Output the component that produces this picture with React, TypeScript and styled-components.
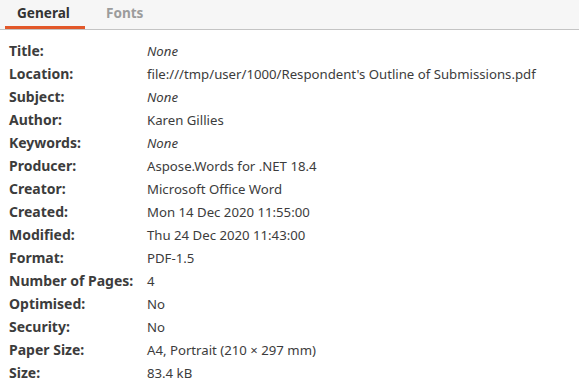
import React from 'react';
import styled, { createGlobalStyle } from 'styled-components';

const Global = createGlobalStyle`
  html, body { margin: 0; padding: 0; background: #fff; }
  body { font-family: "Noto Sans", "Open Sans", sans-serif; }
`;

const Page = styled.div`
  width: 579px;
  height: 386px;
  overflow: hidden;
  background: #fff;
`;

const TabBar = styled.div`
  display: flex;
  gap: 9px;
  height: 29px;
  background: #f6f6f6;
  border-bottom: 1px solid #c4c4c4;
  padding-left: 5px;
`;

const Tab = styled.div<{ active?: boolean }>`
  padding: 3px 15px 0 12px;
  font-size: 13.6px;
  font-weight: 700;
  color: ${p => (p.active ? '#333' : '#9c9c9c')};
  box-shadow: ${p => (p.active ? 'inset 0 -3px 0 #e2582a' : 'none')};
`;

const Props = styled.div`
  display: grid;
  grid-template-columns: 138px 1fr;
  grid-auto-rows: 23px;
  padding: 9px 0 0 9px;
  align-items: center;
`;

const Label = styled.div`
  font-size: 14px;
  font-weight: 700;
  color: #3c3c3c;
  white-space: nowrap;
`;

const Value = styled.div<{ none?: boolean }>`
  font-size: 13.2px;
  color: #3c3c3c;
  font-style: ${p => (p.none ? 'italic' : 'normal')};
  white-space: nowrap;
`;

const rows: [string, string][] = [
  ['Title:', ''],
  ['Location:', "file:///tmp/user/1000/Respondent's Outline of Submissions.pdf"],
  ['Subject:', ''],
  ['Author:', 'Karen Gillies'],
  ['Keywords:', ''],
  ['Producer:', 'Aspose.Words for .NET 18.4'],
  ['Creator:', 'Microsoft Office Word'],
  ['Created:', 'Mon 14 Dec 2020 11:55:00'],
  ['Modified:', 'Thu 24 Dec 2020 11:43:00'],
  ['Format:', 'PDF-1.5'],
  ['Number of Pages:', '4'],
  ['Optimised:', 'No'],
  ['Security:', 'No'],
  ['Paper Size:', 'A4, Portrait (210 × 297 mm)'],
  ['Size:', '83.4 kB'],
];

export default function App() {
  return (
    <Page>
      <Global />
      <TabBar>
        <Tab active>General</Tab>
        <Tab>Fonts</Tab>
      </TabBar>
      <Props>
        {rows.map(([k, v]) => (
          <React.Fragment key={k}>
            <Label>{k}</Label>
            <Value none={!v}>{v || 'None'}</Value>
          </React.Fragment>
        ))}
      </Props>
    </Page>
  );
}
